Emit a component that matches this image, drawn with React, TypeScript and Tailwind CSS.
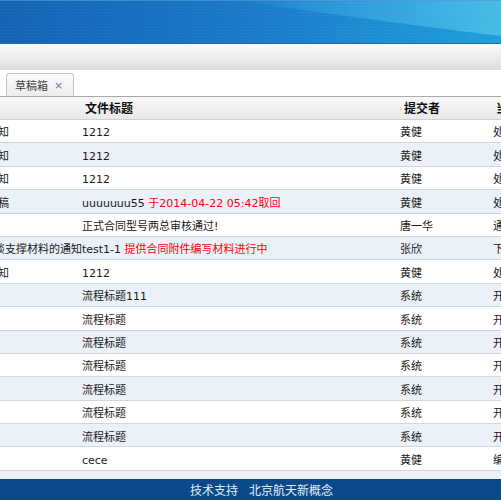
import React from "react";

type Row = {
  c1: string;
  c1ml: string;
  title: string;
  red?: string;
  who: string;
  c4: string;
};

const rows: Row[] = [
  { c1: "知", c1ml: "ml-[-2px]", title: "1212", who: "黄健", c4: "处理中" },
  { c1: "知", c1ml: "ml-[-2px]", title: "1212", who: "黄健", c4: "处理中" },
  { c1: "知", c1ml: "ml-[-2px]", title: "1212", who: "黄健", c4: "处理中" },
  { c1: "稿", c1ml: "ml-[-2px]", title: "uuuuuuu55", red: "于2014-04-22 05:42取回", who: "黄健", c4: "处理中" },
  { c1: "", c1ml: "", title: "正式合同型号两总审核通过!", who: "唐一华", c4: "通过" },
  { c1: "谈支撑材料的通知", c1ml: "ml-[-6px]", title: "test1-1", red: "提供合同附件编写材料进行中", who: "张欣", c4: "下发" },
  { c1: "知", c1ml: "ml-[-2px]", title: "1212", who: "黄健", c4: "处理中" },
  { c1: "", c1ml: "", title: "流程标题111", who: "系统", c4: "开始" },
  { c1: "", c1ml: "", title: "流程标题", who: "系统", c4: "开始" },
  { c1: "", c1ml: "", title: "流程标题", who: "系统", c4: "开始" },
  { c1: "", c1ml: "", title: "流程标题", who: "系统", c4: "开始" },
  { c1: "", c1ml: "", title: "流程标题", who: "系统", c4: "开始" },
  { c1: "", c1ml: "", title: "流程标题", who: "系统", c4: "开始" },
  { c1: "", c1ml: "", title: "流程标题", who: "系统", c4: "开始" },
  { c1: "", c1ml: "", title: "cece", who: "黄健", c4: "编辑" },
];

function Banner() {
  return (
    <div className="h-[44px] w-full shrink-0 bg-[#1a6fc2]">
      <svg width="100%" height="44" viewBox="0 0 501 44" preserveAspectRatio="none">
        <defs>
          <linearGradient id="bg" x1="0" y1="0" x2="1" y2="0">
            <stop offset="0" stopColor="#1462b5" />
            <stop offset="0.45" stopColor="#1a78c8" />
            <stop offset="0.75" stopColor="#1d8ed4" />
            <stop offset="1" stopColor="#1fa0dc" />
          </linearGradient>
          <linearGradient id="hl" x1="0" y1="0" x2="1" y2="0">
            <stop offset="0" stopColor="#3aa8e4" stopOpacity="0" />
            <stop offset="0.5" stopColor="#40aee2" stopOpacity="0.6" />
            <stop offset="1" stopColor="#48bce6" stopOpacity="1" />
          </linearGradient>
          <pattern id="tex" width="3" height="3" patternUnits="userSpaceOnUse">
            <rect width="1" height="1" fill="#ffffff" opacity="0.05" />
            <rect x="1.5" y="1.5" width="1" height="1" fill="#000000" opacity="0.04" />
          </pattern>
        </defs>
        <rect width="501" height="44" fill="url(#bg)" />
        <path d="M230 0 C 320 12, 400 24, 501 36 L501 0 Z" fill="url(#hl)" />
        <rect width="501" height="44" fill="url(#tex)" />
        <rect width="501" height="1" fill="#4f9ad8" opacity="0.7" />
        <rect y="43" width="501" height="1" fill="#1a6cb8" />
      </svg>
    </div>
  );
}

export default function App() {
  const body = "font-['DejaVu_Sans','Noto_Sans_CJK_SC',sans-serif]";
  const cjk = "font-['Noto_Sans_CJK_SC','DejaVu_Sans',sans-serif]";
  return (
    <div className="flex h-[500px] w-[501px] flex-col overflow-hidden bg-white">
      <Banner />
      <div className="h-[26px] shrink-0 bg-gradient-to-b from-[#fbfbfb] to-[#dedede]" />
      <div className="flex h-[26px] shrink-0 items-end bg-white pl-[6px]">
        <div className={`flex h-[23px] items-center gap-[6px] rounded-t-[3px] border border-b-0 border-[#c4c4c4] bg-gradient-to-b from-[#fdfdfd] to-[#ececec] pl-[8px] pr-[10px] ${cjk}`}>
          <span className="text-[11px] leading-none text-[#444]">草稿箱</span>
          <span className="font-['DejaVu_Sans',sans-serif] text-[11px] leading-none text-[#5b84c8]">×</span>
        </div>
      </div>
      <div className="flex min-h-0 flex-1 flex-col overflow-hidden">
        <div className={`grid h-[24px] shrink-0 grid-cols-[80px_317px_93px_1fr] items-center border-t border-b border-t-[#a9a9a9] border-b-[#d0d0d0] bg-gradient-to-b from-[#f8f8f8] to-[#e9e9e9] text-[12px] font-bold text-[#111] ${cjk}`}>
          <div />
          <div className="pl-[5px] whitespace-nowrap">文件标题</div>
          <div className="pl-[7px] whitespace-nowrap">提交者</div>
          <div className="pl-[6px] whitespace-nowrap overflow-hidden">当前环节</div>
        </div>
        {rows.map((r, i) => (
          <div
            key={i}
            className={`grid h-[23.4px] shrink-0 grid-cols-[80px_317px_93px_1fr] items-center border-b border-[#d3d6da] pt-[5px] text-[11px] text-[#1a1a1a] ${body} ${i % 2 === 1 ? "bg-[#eaf1f8]" : "bg-white"}`}
          >
            <div className="whitespace-nowrap">
              <span className={`inline-block ${r.c1ml}`}>{r.c1}</span>
            </div>
            <div className="whitespace-nowrap pl-[2px]">
              {r.title}
              {r.red && <span className="text-[#ff0000]"> {r.red}</span>}
            </div>
            <div className="whitespace-nowrap pl-[3px]">{r.who}</div>
            <div className="whitespace-nowrap overflow-hidden pl-[3px]">{r.c4}</div>
          </div>
        ))}
        <div className="h-[20px] shrink-0 bg-[#eaf1f8]" />
      </div>
      <div className={`flex h-[21px] shrink-0 items-center gap-[11px] bg-[#0b4a8a] pl-[190px] text-[12px] text-[#e6edf5] ${cjk}`}>
        <span>技术支持</span>
        <span>北京航天新概念</span>
      </div>
    </div>
  );
}
